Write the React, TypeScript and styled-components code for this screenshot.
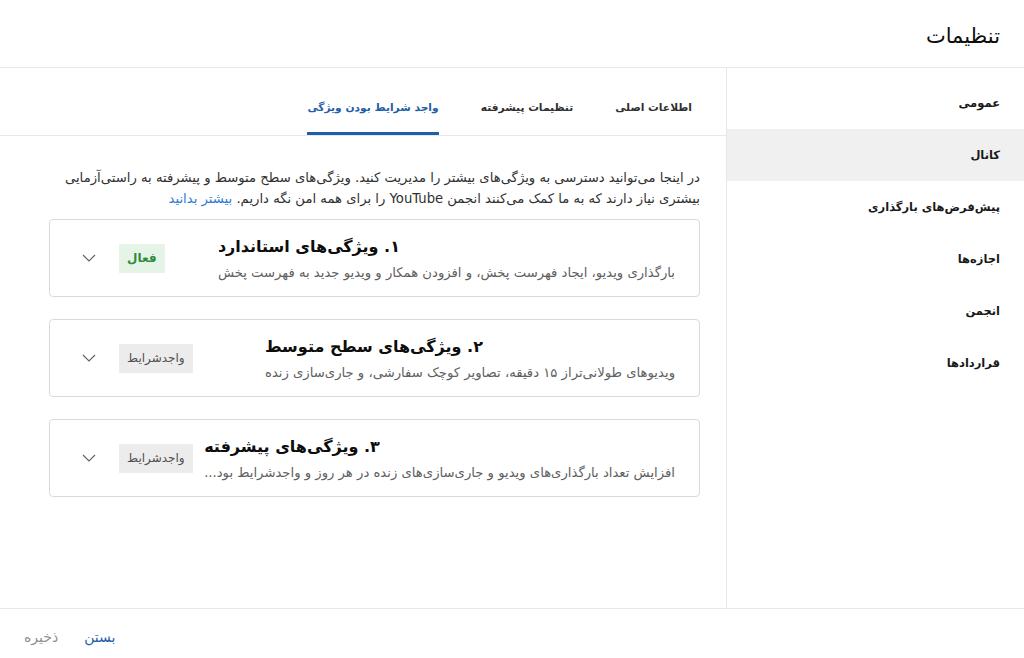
import React from 'react';
import styled, { createGlobalStyle } from 'styled-components';

/* ── Global ── */

const GlobalStyle = createGlobalStyle`
    html, body {
        margin: 0;
        padding: 0;
        background: #ffffff;
    }
    body {
        font-family: "DejaVu Sans", "Roboto", sans-serif;
        color: #0d0d0d;
    }
    * { box-sizing: border-box; }
`;

/* ── Styles ── */

const Dialog = styled.div`
    direction: rtl;
    width: 1024px;
    height: 658px;
    display: flex;
    flex-direction: column;
    background: #fff;
    overflow: hidden;
`;

const Header = styled.header`
    height: 68px;
    flex-shrink: 0;
    display: flex;
    align-items: center;
    padding: 4px 24px 0;
    border-bottom: 1px solid #e8e8e8;
`;

const Title = styled.h1`
    margin: 0;
    font-size: 21px;
    font-weight: 400;
    color: #0d0d0d;
`;

const Body = styled.div`
    flex: 1;
    display: flex;
    min-height: 0;
`;

const Sidebar = styled.nav`
    width: 298px;
    flex-shrink: 0;
    border-left: 1px solid #e8e8e8;
    padding-top: 9px;
`;

const NavItem = styled.div<{ $active?: boolean }>`
    height: 52px;
    display: flex;
    align-items: center;
    padding: 0 24px;
    font-size: 11.5px;
    font-weight: 700;
    color: #1a1a1a;
    background: ${p => (p.$active ? '#f0f0f0' : 'transparent')};
`;

const Main = styled.main`
    flex: 1;
    display: flex;
    flex-direction: column;
    min-width: 0;
`;

const TabBar = styled.div`
    height: 68px;
    flex-shrink: 0;
    display: flex;
    gap: 42px;
    padding-right: 34px;
    border-bottom: 1px solid #e8e8e8;
`;

const Tab = styled.div<{ $active?: boolean }>`
    display: flex;
    align-items: center;
    padding-top: 15px;
    font-size: 10.7px;
    font-weight: 700;
    color: ${p => (p.$active ? '#1f5ea8' : '#303030')};
    border-bottom: 3px solid ${p => (p.$active ? '#1f5ea8' : 'transparent')};
`;

const Content = styled.div`
    padding: 31px 26px 0 49px;
    display: flex;
    flex-direction: column;
`;

const Intro = styled.p`
    margin: 0 0 10px 0;
    font-size: 13.2px;
    line-height: 21px;
    color: #303030;
`;

const Link = styled.a`
    color: #2f7bd0;
    text-decoration: none;
`;

const CardList = styled.div`
    display: flex;
    flex-direction: column;
    gap: 22px;
`;

const Card = styled.div`
    height: 78px;
    display: flex;
    align-items: center;
    border: 1px solid #dadada;
    border-radius: 4px;
    padding: 0 24px 0 32px;
`;

const CardText = styled.div`
    display: flex;
    flex-direction: column;
    gap: 9px;
    min-width: 0;
`;

const CardTitle = styled.div`
    align-self: flex-end;
    font-size: 16px;
    font-weight: 700;
    color: #0d0d0d;
    white-space: nowrap;
`;

const CardSub = styled.div`
    font-size: 13.2px;
    color: #606060;
    white-space: nowrap;
`;

const Badge = styled.span<{ $tone: 'green' | 'grey' }>`
    margin-right: auto;
    height: 29px;
    display: flex;
    align-items: center;
    padding: 0 8px;
    font-size: 12px;
    font-weight: ${p => (p.$tone === 'green' ? 700 : 400)};
    background: ${p => (p.$tone === 'green' ? '#e6f4e8' : '#ececec')};
    color: ${p => (p.$tone === 'green' ? '#2e8b3a' : '#505050')};
`;

const Chevron = styled.svg`
    width: 14px;
    height: 8px;
    margin-right: 23px;
    flex-shrink: 0;
`;

const Footer = styled.footer`
    height: 50px;
    flex-shrink: 0;
    display: flex;
    align-items: center;
    justify-content: flex-end;
    gap: 26px;
    padding: 6px 24px 0;
    border-top: 1px solid #e8e8e8;
`;

const FooterButton = styled.button<{ $primary?: boolean }>`
    background: none;
    border: none;
    padding: 0;
    font-family: inherit;
    font-size: 14px;
    color: ${p => (p.$primary ? '#1f5ea8' : '#909090')};
    cursor: pointer;
`;

/* ── Data ── */

const navItems = ['عمومی', 'کانال', 'پیش‌فرض‌های بارگذاری', 'اجازه‌ها', 'انجمن', 'قراردادها'];

const tabs = ['اطلاعات اصلی', 'تنظیمات پیشرفته', 'واجد شرایط بودن ویژگی'];

const features = [
    {
        title: '۱. ویژگی‌های استاندارد',
        sub: 'بارگذاری ویدیو، ایجاد فهرست پخش، و افزودن همکار و ویدیو جدید به فهرست پخش',
        badge: 'فعال',
        tone: 'green' as const,
    },
    {
        title: '۲. ویژگی‌های سطح متوسط',
        sub: 'ویدیوهای طولانی‌تراز ۱۵ دقیقه، تصاویر کوچک سفارشی، و جاری‌سازی زنده',
        badge: 'واجدشرایط',
        tone: 'grey' as const,
    },
    {
        title: '۳. ویژگی‌های پیشرفته',
        sub: 'افزایش تعداد بارگذاری‌های ویدیو و جاری‌سازی‌های زنده در هر روز و واجدشرایط بود...',
        badge: 'واجدشرایط',
        tone: 'grey' as const,
    },
];

/* ── Component ── */

export default function App() {
    return (
        <>
            <GlobalStyle />
            <Dialog>
                <Header>
                    <Title>تنظیمات</Title>
                </Header>
                <Body>
                    <Sidebar>
                        {navItems.map(item => (
                            <NavItem key={item} $active={item === 'کانال'}>
                                {item}
                            </NavItem>
                        ))}
                    </Sidebar>
                    <Main>
                        <TabBar>
                            {tabs.map((t, i) => (
                                <Tab key={t} $active={i === 2}>
                                    {t}
                                </Tab>
                            ))}
                        </TabBar>
                        <Content>
                            <Intro>
                                در اینجا می‌توانید دسترسی به ویژگی‌های بیشتر را مدیریت کنید. ویژگی‌های سطح متوسط و
                                پیشرفته به راستی‌آزمایی بیشتری نیاز دارند که به ما کمک می‌کنند انجمن YouTube را برای همه
                                امن نگه داریم. <Link href="#">بیشتر بدانید</Link>
                            </Intro>
                            <CardList>
                                {features.map(f => (
                                    <Card key={f.title}>
                                        <CardText>
                                            <CardTitle>{f.title}</CardTitle>
                                            <CardSub>{f.sub}</CardSub>
                                        </CardText>
                                        <Badge $tone={f.tone}>{f.badge}</Badge>
                                        <Chevron viewBox="0 0 14 8" fill="none">
                                            <path d="M1 1 L7 7 L13 1" stroke="#606060" strokeWidth="1.1" />
                                        </Chevron>
                                    </Card>
                                ))}
                            </CardList>
                        </Content>
                    </Main>
                </Body>
                <Footer>
                    <FooterButton $primary>بستن</FooterButton>
                    <FooterButton>ذخیره</FooterButton>
                </Footer>
            </Dialog>
        </>
    );
}
